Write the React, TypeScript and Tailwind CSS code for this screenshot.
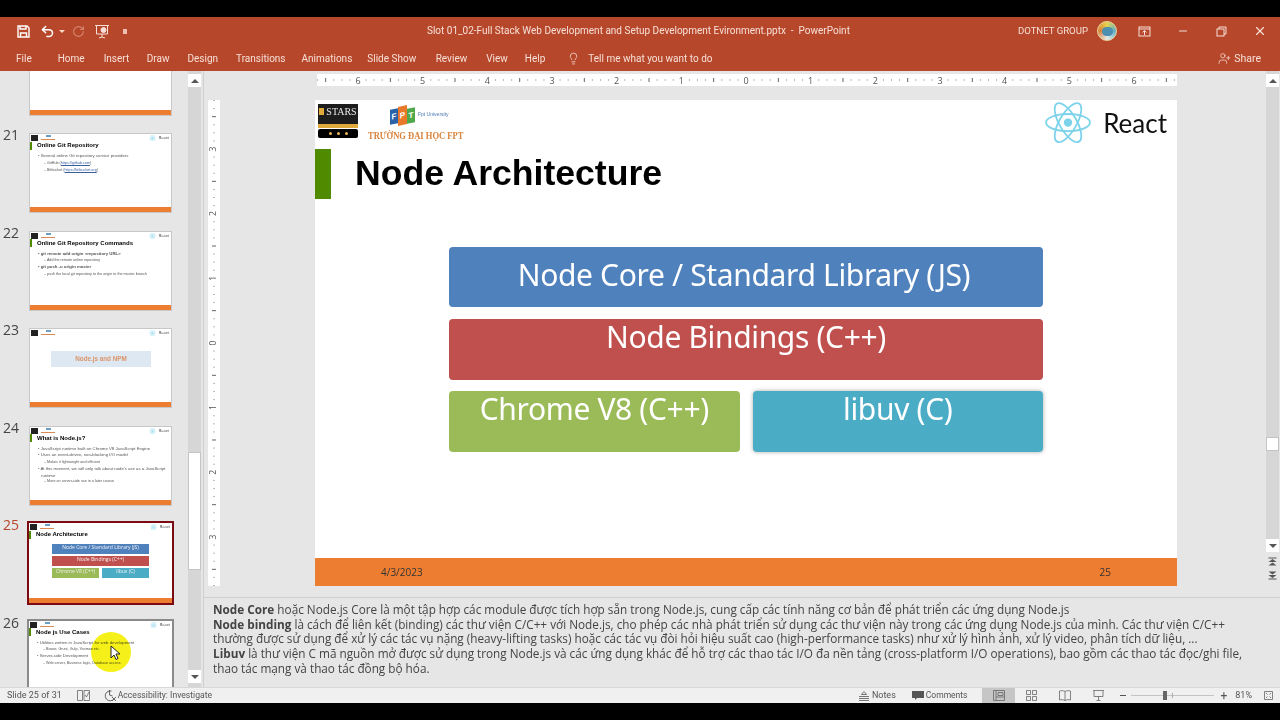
import { Lightbulb, Minus, Undo2, RotateCw, UserPlus, X } from "lucide-react";

const tabs = [
  ["File", "ml-[16px]"],
  ["Home", "ml-[26px]"],
  ["Insert", "ml-[19px]"],
  ["Draw", "ml-[17.5px]"],
  ["Design", "ml-[18px]"],
  ["Transitions", "ml-[18px]"],
  ["Animations", "ml-[16px]"],
  ["Slide Show", "ml-[15px]"],
  ["Review", "ml-[19.5px]"],
  ["View", "ml-[19px]"],
  ["Help", "ml-[17px]"],
];

function ReactLogo({ size, className }: { size: number; className?: string }) {
  return (
    <svg width={size} height={size * 0.9} viewBox="-12 -10.8 24 21.6" fill="none" stroke="#7dd3ea" strokeWidth="0.9" className={className}>
      <circle r="2.1" fill="#7dd3ea" stroke="none" />
      <ellipse rx="11" ry="4.3" />
      <ellipse rx="11" ry="4.3" transform="rotate(60)" />
      <ellipse rx="11" ry="4.3" transform="rotate(120)" />
    </svg>
  );
}

function Thumb({ n, title, children, selected, hover }: { n: number; title?: string; children?: React.ReactNode; selected?: boolean; hover?: boolean }) {
  return (
    <div className="flex h-[80px] shrink-0">
      <div className={`w-[29px] pl-[3px] text-[14px] leading-[18px] -mt-[7px] ${selected ? "text-[#b7472a]" : "text-[#444]"}`}>{n}</div>
      <div className={`relative w-[143px] h-[80px] bg-white flex flex-col ${selected ? "outline-2 outline-[#7b0a12]" : hover ? "outline-2 outline-[#8a8a8a]" : "border border-[#c8c8c8]"}`}>
        <div className="flex items-start justify-between h-[7px] pl-[1px] pr-[2px] pt-[1px] blur-[0.3px]">
          <div className="flex gap-[3px]">
            <div className="w-[7px] h-[6px] bg-[#222]" />
            <div className="w-[14px] h-[6px] flex flex-col items-center">
              <div className="w-[5px] h-[2px] bg-[#6aa0c8]" />
              <div className="w-[14px] h-[1px] mt-[2px] bg-[#d98a55]" />
            </div>
          </div>
          <div className="flex items-center gap-[3px]">
            <ReactLogo size={7} />
            <span className="text-[4px] leading-[6px] text-[#333]">React</span>
          </div>
        </div>
        {title && (
          <div className="flex items-center h-[9px] mb-[3px] blur-[0.25px]">
            <div className="w-[2px] h-[8px] bg-[#4f8a00]" />
            <span className="ml-[5px] text-[6px] font-bold text-black font-['Liberation_Sans',sans-serif] whitespace-nowrap">{title}</span>
          </div>
        )}
        <div className="flex-1 min-h-0 blur-[0.35px]">{children}</div>
        <div className="h-[5px] bg-[#ed7d31] shrink-0" />
      </div>
    </div>
  );
}

function Bullet({ children, sub, bold }: { children: React.ReactNode; sub?: boolean; bold?: boolean }) {
  return (
    <div className={`leading-[6.8px] whitespace-nowrap text-[#555] font-['Liberation_Sans',sans-serif] ${sub ? "pl-[14px] text-[3.7px]" : "pl-[8px] text-[4.3px]"} ${bold ? "font-bold text-[#111]" : ""}`}>
      {sub ? "– " : "• "}
      {children}
    </div>
  );
}

function HRuler() {
  const ticks = Array.from({ length: 107 }, (_, i) => i - 53);
  return (
    <svg width="860" height="12" className="block bg-white">
      {ticks.map((i) => {
        const x = 429 + i * 8.083;
        if (i % 8 === 0) {
          return (
            <text key={i} x={x} y="9.5" fontSize="9" fill="#555" textAnchor="middle" fontFamily="Open Sans">
              {Math.abs(i / 8)}
            </text>
          );
        }
        if (i % 4 === 0) return <line key={i} x1={x} x2={x} y1="4" y2="8" stroke="#666" />;
        return <line key={i} x1={x} x2={x} y1="5" y2="7" stroke="#bbb" />;
      })}
    </svg>
  );
}

function VRuler() {
  const ticks = Array.from({ length: 61 }, (_, i) => i - 30);
  return (
    <svg width="12" height="486" className="block bg-white">
      {ticks.map((i) => {
        const y = 243 + i * 8.083;
        if (i % 8 === 0) {
          return (
            <text key={i} x="6" y={y} fontSize="8.5" fill="#555" textAnchor="middle" dominantBaseline="middle" transform={`rotate(-90 6 ${y})`} fontFamily="Open Sans">
              {Math.abs(i / 8)}
            </text>
          );
        }
        if (i % 4 === 0) return <line key={i} x1="4" x2="8" y1={y} y2={y} stroke="#666" />;
        return <line key={i} x1="5" x2="7" y1={y} y2={y} stroke="#bbb" />;
      })}
    </svg>
  );
}

function ScrollBtn({ down }: { down?: boolean }) {
  return (
    <div className="w-[13px] h-[13px] bg-white flex items-center justify-center shrink-0">
      <div className={`w-0 h-0 border-x-[4px] border-x-transparent ${down ? "border-t-[4px] border-t-[#555]" : "border-b-[4px] border-b-[#555]"}`} />
    </div>
  );
}

export default function App() {
  return (
    <div className="w-[1280px] h-[720px] bg-black flex flex-col overflow-hidden font-['Open_Sans',sans-serif]">
      <div className="h-[17px] shrink-0" />

      {/* title bar + tabs */}
      <div className="h-[54px] shrink-0 bg-[#b7472a] text-[#f6e0d8] flex flex-col font-['Roboto',sans-serif]">
        <div className="relative h-[28px] flex items-center">
          <div className="flex items-center ml-[17px]">
            <svg width="13" height="13" viewBox="0 0 13 13" fill="none" stroke="#fff" strokeWidth="1.4">
              <path d="M1 1h9l2 2v9H1z" />
              <path d="M3 1v3h6V1M3.5 12V8h6v4" />
            </svg>
            <Undo2 size={15} strokeWidth={2.4} className="ml-[10px] text-white" />
            <div className="ml-[4px] w-0 h-0 border-x-[3px] border-x-transparent border-t-[3px] border-t-[#f6d8cc]" />
            <RotateCw size={13} strokeWidth={2} className="ml-[7px] text-[#d5886f]" />
            <svg width="14" height="15" viewBox="0 0 14 15" fill="none" stroke="#f6e0d8" strokeWidth="1" className="ml-[10px]">
              <path d="M0 1.5h14M1.5 2v8h11V2M7 10v3M4 14l3-1 3 1" />
              <circle cx="8.5" cy="6" r="2.5" fill="#f6e0d8" />
            </svg>
            <div className="ml-[14px] w-[4px] h-[5px] bg-[#eebfae]" />
          </div>
          <div className="absolute left-[427px] top-[6px] text-[10px] leading-[15px] whitespace-pre">Slot 01_02-Full Stack Web Development and Setup Development Evironment.pptx  -  PowerPoint</div>
          <div className="ml-auto flex items-center">
            <span className="text-[9.6px]">DOTNET GROUP</span>
            <div className="ml-[9px] w-[20px] h-[20px] rounded-full bg-[conic-gradient(#e8d14a,#5fb0c8,#e8e8e8,#d9823a,#e8d14a)] border border-[#e9d7a0] flex items-center justify-center">
              <div className="w-[11px] h-[9px] rounded-full bg-[#4d8fb0]" />
            </div>
            <svg width="13" height="11" viewBox="0 0 13 11" fill="none" stroke="#f6e0d8" className="ml-[21px]">
              <rect x="1" y="1" width="11" height="9" />
              <path d="M1 3h11M6.5 9V5M4.5 6.5l2-2 2 2" />
            </svg>
            <Minus size={12} className="ml-[26px]" />
            <svg width="11" height="11" viewBox="0 0 11 11" fill="none" stroke="#f6e0d8" className="ml-[27px]">
              <rect x="1" y="3" width="7" height="7" />
              <path d="M3 3V1h7v7H8" />
            </svg>
            <X size={14} className="ml-[26px] mr-[13px]" />
          </div>
        </div>
        <div className="h-[26px] flex items-center pt-[1px] text-[10px]">
          {tabs.map(([t, m]) => (
            <span key={t} className={m}>{t}</span>
          ))}
          <Lightbulb size={13} strokeWidth={1.4} className="ml-[22px]" />
          <span className="ml-[8px]">Tell me what you want to do</span>
          <div className="ml-auto mr-[19px] flex items-center gap-[3px]">
            <UserPlus size={13} strokeWidth={1.4} />
            <span className="text-[10.5px]">Share</span>
          </div>
        </div>
      </div>

      <div className="flex-1 min-h-0 flex bg-[#e6e6e6]">
        {/* slide list */}
        <div className="relative w-[204px] shrink-0 border-r border-r-[#cfcfcf] flex overflow-hidden">
          <div className="w-[188px] shrink-0 flex flex-col gap-[17.5px] -mt-[35.5px]">
            {/* slide 20, scrolled mostly out of view */}
            <div className="ml-[29px] w-[143px] h-[80px] shrink-0 bg-white border border-[#c8c8c8] flex flex-col justify-end">
              <div className="h-[5px] bg-[#ed7d31]" />
            </div>
            <Thumb n={21} title="Online Git Repository">
              <Bullet>Several online Git repository service providers</Bullet>
              <Bullet sub>GitHub (<span className="text-[#3a5fa0] underline">https://github.com</span>)</Bullet>
              <Bullet sub>Bitbucket (<span className="text-[#3a5fa0] underline">https://bitbucket.org</span>)</Bullet>
            </Thumb>
            <Thumb n={22} title="Online Git Repository Commands">
              <Bullet bold>git remote add origin &lt;repository URL&gt;</Bullet>
              <Bullet sub>Add the remote online repository</Bullet>
              <Bullet bold>git push -u origin master</Bullet>
              <Bullet sub>push the local git repository to the origin to the master branch</Bullet>
            </Thumb>
            <Thumb n={23}>
              <div className="ml-[21px] mt-[15px] w-[100px] h-[16px] bg-[#dde8f3] flex items-center justify-center text-[6.3px] font-bold text-[#dc9468] font-['Liberation_Sans',sans-serif]">Node.js and NPM</div>
            </Thumb>
            <Thumb n={24} title="What is Node.js?">
              <Bullet>JavaScript runtime built on Chrome V8 JavaScript Engine</Bullet>
              <Bullet>Uses an event-driven, non-blocking I/O model</Bullet>
              <Bullet sub>Makes it lightweight and efficient</Bullet>
              <Bullet>At this moment, we will only talk about node's use as a JavaScript</Bullet>
              <div className="pl-[11px] text-[4.3px] leading-[5px] text-[#555] font-['Liberation_Sans',sans-serif]">runtime</div>
              <Bullet sub>More on server-side use in a later course</Bullet>
            </Thumb>
            <Thumb n={25} title="Node Architecture" selected>
              <div className="ml-[23px] w-[97px] mt-[2px] flex flex-col gap-[2px] text-[5px] leading-[7px] text-[#f2f2f2] text-center whitespace-nowrap">
                <div className="h-[10px] bg-[#4f81bd]">Node Core / Standard Library (JS)</div>
                <div className="h-[10px] bg-[#c0504d]">Node Bindings (C++)</div>
                <div className="flex gap-[3px]">
                  <div className="h-[10px] flex-1 bg-[#9bbb59]">Chrome V8 (C++)</div>
                  <div className="h-[10px] flex-1 bg-[#4bacc6]">libuv (C)</div>
                </div>
              </div>
            </Thumb>
            <Thumb n={26} title="Node js Use Cases" hover>
              <Bullet>Utilities written in JavaScript for web development</Bullet>
              <Bullet sub>Bower, Grunt, Gulp, Yeoman etc.</Bullet>
              <Bullet>Server-side Development</Bullet>
              <Bullet sub>Web server, Business logic, Database access</Bullet>
            </Thumb>
          </div>

          {/* scrollbar */}
          <div className="w-[13px] h-full bg-[#d6d6d6] flex flex-col pt-[3px] pb-[4px]">
            <ScrollBtn />
            <div className="mt-[365px] h-[118px] bg-white border border-[#c4c4c4]" />
            <div className="mt-auto"><ScrollBtn down /></div>
          </div>

          {/* presenter highlight over slide 26 */}
          <div className="absolute left-[91px] top-[561px] w-[40px] h-[40px] rounded-full bg-[#f4ee00]/90 blur-[0.5px] mix-blend-multiply" />
          <svg width="12" height="16" viewBox="0 0 12 16" className="absolute left-[110px] top-[574px]">
            <path d="M1 1v12l3-3 2 4.5 2-1-2-4.5h4z" fill="#fff" stroke="#222" />
          </svg>
        </div>

        {/* editor + notes */}
        <div className="flex-1 min-w-0 flex flex-col">
          <div className="h-[526px] shrink-0 flex">
            <div className="pl-[4px] pt-[29px]">
              <VRuler />
            </div>
            <div className="ml-[95px] pt-[3px] flex flex-col">
              <div className="ml-[2px]"><HRuler /></div>
              <div className="mt-[14px] w-[862px] h-[486px] bg-white flex flex-col">
                {/* logos */}
                <div className="h-[46px] flex pl-[3px] pt-[4px] shrink-0">
                  <div className="w-[40px] flex flex-col">
                    <div className="h-[20px] bg-[#1d1d1d] text-[#e8e8e8] flex items-start justify-center gap-[2px] pt-[1px] text-[10px] leading-[13px] font-['Liberation_Serif',serif]">
                      <div className="w-[5px] h-[7px] mt-[3px] bg-[#e0a93c]" />
                      STARS
                    </div>
                    <div className="h-[4px] bg-[#e0a93c]" />
                    <div className="h-[9px] mt-[1px] bg-black rounded-[2px] flex items-center justify-center gap-[5px]">
                      <div className="w-[3px] h-[3px] rounded-full bg-[#e8b84a]" />
                      <div className="w-[3px] h-[3px] rounded-full bg-[#e8b84a]" />
                      <div className="w-[3px] h-[3px] rounded-full bg-[#e8b84a]" />
                    </div>
                  </div>
                  <div className="ml-[10px] flex flex-col">
                    <div className="ml-[22px] flex items-center h-[22px]">
                      <span className="w-[8px] h-[15px] mt-[2px] bg-[#2a62a8] text-white text-[8px] font-bold -skew-y-12 text-center leading-[15px] font-['Liberation_Sans',sans-serif]">F</span>
                      <span className="w-[9px] h-[19px] bg-[#e8792b] text-white text-[8px] font-bold -skew-y-12 text-center leading-[19px] font-['Liberation_Sans',sans-serif]">P</span>
                      <span className="w-[8px] h-[15px] bg-[#4fa84a] text-white text-[8px] font-bold -skew-y-12 text-center leading-[15px] font-['Liberation_Sans',sans-serif]">T</span>
                      <span className="ml-[3px] text-[5px] text-[#4a78b0] font-['Liberation_Sans',sans-serif] whitespace-nowrap">Fpt University</span>
                    </div>
                    <div className="mt-[4px] text-[10px] leading-[12px] font-bold text-[#d9823a] whitespace-nowrap origin-left scale-x-[0.85] font-['Liberation_Serif',serif]">TRƯỜNG ĐẠI HỌC FPT</div>
                  </div>
                  <div className="ml-auto flex items-center h-[38px] mr-[10px]">
                    <ReactLogo size={48} />
                    <span className="ml-[11px] text-[26px] leading-[36px] text-[#111] font-['Lato',sans-serif]">React</span>
                  </div>
                </div>
                {/* title */}
                <div className="flex items-center h-[52px] mt-[2px] shrink-0">
                  <div className="w-[16px] h-[50px] bg-[#4f8a00]" />
                  <h1 className="ml-[24px] -mt-[1px] text-[35.6px] font-bold text-black font-['Liberation_Sans',sans-serif] whitespace-nowrap">Node Architecture</h1>
                </div>
                {/* architecture boxes */}
                <div className="ml-[134px] mt-[47px] w-[594px] flex flex-col gap-[12px] text-white text-[30px] text-center font-['Noto_Sans',sans-serif] tracking-[-0.35px]">
                  <div className="h-[60px] bg-[#4f81bd] rounded-[4px] leading-[56px] pr-[4px]">Node Core / Standard Library (JS)</div>
                  <div className="h-[61px] bg-[#c0504d] rounded-[4px] leading-[36px]">Node Bindings (C++)</div>
                  <div className="flex gap-[13px] -mt-[1px]">
                    <div className="h-[61px] flex-1 bg-[#9bbb59] rounded-[4px] leading-[36px]">Chrome V8 (C++)</div>
                    <div className="h-[61px] flex-1 bg-[#4bacc6] rounded-[4px] leading-[36px] shadow-[0_0_4px_#aaa]">libuv (C)</div>
                  </div>
                </div>
                {/* footer */}
                <div className="mt-auto h-[28px] bg-[#ed7d31] flex items-center text-[10px] text-[#333]">
                  <span className="ml-[66px]">4/3/2023</span>
                  <span className="ml-auto mr-[66px]">25</span>
                </div>
              </div>
            </div>
            <div className="ml-auto w-[13px] mr-[1px] pt-[3px] flex flex-col bg-[#d6d6d6]">
              <ScrollBtn />
              <div className="mt-[350px] h-[14px] bg-white border border-[#c4c4c4]" />
              <div className="mt-[88px]"><ScrollBtn down /></div>
              <div className="bg-[#e6e6e6] flex-1 flex flex-col items-center pt-[5px] gap-[5px] text-[#555]">
                <svg width="9" height="9" viewBox="0 0 9 9" fill="currentColor"><path d="M0.5 0.5h8v1h-8zM4.5 2l4 3h-8zM4.5 5.5l4 3h-8z" /></svg>
                <svg width="9" height="9" viewBox="0 0 9 9" fill="currentColor"><path d="M0.5 0.5h8l-4 3zM0.5 4l8 0-4 3zM0.5 7.5h8v1h-8z" /></svg>
              </div>
            </div>
          </div>

          {/* notes */}
          <div className="flex-1 min-h-0 border-t border-t-[#cfcfcf] pl-[9px] pt-[4px] text-[11.75px] leading-[14.7px] text-[#444] whitespace-nowrap overflow-hidden">
            <div><b>Node Core</b> hoặc Node.js Core là một tập hợp các module được tích hợp sẵn trong Node.js, cung cấp các tính năng cơ bản để phát triển các ứng dụng Node.js</div>
            <div><b>Node binding</b> là cách để liên kết (binding) các thư viện C/C++ với Node.js, cho phép các nhà phát triển sử dụng các thư viện này trong các ứng dụng Node.js của mình. Các thư viện C/C++</div>
            <div>thường được sử dụng để xử lý các tác vụ nặng (heavy-lifting tasks) hoặc các tác vụ đòi hỏi hiệu suất cao (high-performance tasks) như xử lý hình ảnh, xử lý video, phân tích dữ liệu, ...</div>
            <div><b>Libuv</b> là thư viện C mã nguồn mở được sử dụng trong Node.js và các ứng dụng khác để hỗ trợ các thao tác I/O đa nền tảng (cross-platform I/O operations), bao gồm các thao tác đọc/ghi file,</div>
            <div>thao tác mạng và thao tác đồng bộ hóa.</div>
          </div>
        </div>
      </div>

      {/* status bar */}
      <div className="h-[16px] shrink-0 bg-[#f0f0f0] flex items-center text-[9px] text-[#555] whitespace-nowrap border-t border-t-[#d8d8d8] font-['Roboto',sans-serif]">
        <span className="ml-[7px]">Slide 25 of 31</span>
        <svg width="13" height="11" viewBox="0 0 13 11" fill="none" stroke="#666" strokeWidth="0.8" className="ml-[15px]">
          <path d="M0.5 0.5h5v10h-5zM7 0.5h5.5v10H7zM8 5l1.5 2L12 2" />
        </svg>
        <svg width="13" height="13" viewBox="0 0 13 13" fill="none" stroke="#555" strokeWidth="0.9" className="ml-[14px]">
          <path d="M7.5 2A5 5 0 1 0 9 11M5.5 1v5l3 1M8 8l4 4M12 8l-4 4" />
        </svg>
        <span className="ml-[1px] text-[8.6px]">Accessibility: Investigate</span>

        <div className="ml-auto mr-[7px] flex items-center h-full">
          <svg width="10" height="10" viewBox="0 0 10 10" fill="none" stroke="#555">
            <path d="M5 0.5l2.5 3h-5zM0 5.5h10M0 7.5h10M0 9.5h10" strokeWidth="0.8" />
          </svg>
          <span className="ml-[3px]">Notes</span>
          <svg width="12" height="11" viewBox="0 0 12 11" fill="#555" className="ml-[16px]">
            <path d="M0 1h12v7H5l-2 2V8H0z" />
          </svg>
          <span className="ml-[2px] text-[8.5px]">Comments</span>
          <div className="ml-[15px] w-[33px] h-full bg-[#c6c6c6] flex items-center justify-center">
            <svg width="12" height="11" viewBox="0 0 12 11" fill="none" stroke="#666"><path d="M0.5 0.5h11v10h-11zM3 0.5v10M3 7h8.5M5 2.5h5v3H5z" strokeWidth="0.8" /></svg>
          </div>
          <svg width="11" height="11" viewBox="0 0 11 11" fill="none" stroke="#666" strokeWidth="0.8" className="ml-[11px]">
            <path d="M0.5 0.5h4v4h-4zM6.5 0.5h4v4h-4zM0.5 6.5h4v4h-4zM6.5 6.5h4v4h-4z" />
          </svg>
          <svg width="12" height="11" viewBox="0 0 12 11" fill="none" stroke="#666" strokeWidth="0.8" className="ml-[22px]">
            <path d="M6 1.5C4.5 0.5 2 0.5 0.5 1v9C2 9.5 4.5 9.5 6 10.5 7.5 9.5 10 9.5 11.5 10V1C10 0.5 7.5 0.5 6 1.5zM6 1.5v9" />
          </svg>
          <svg width="11" height="11" viewBox="0 0 11 11" fill="none" stroke="#666" strokeWidth="0.8" className="ml-[22px]">
            <path d="M0 0.5h11M1 1v5.5h9V1M5.5 6.5V10M3.5 10.5h4" />
          </svg>
          <div className="ml-[16px] w-[6px] h-[1px] bg-[#555]" />
          <div className="relative ml-[5px] w-[83px] h-[1px] bg-[#c4c4c4]">
            <div className="absolute left-[32px] -top-[4px] w-[4px] h-[9px] bg-[#666]" />
            <div className="absolute left-[41px] -top-[2px] w-[1px] h-[5px] bg-[#aaa]" />
          </div>
          <span className="ml-[6px] text-[12px] leading-[12px]">+</span>
          <span className="ml-[8px]">81%</span>
          <svg width="9" height="9" viewBox="0 0 9 9" fill="none" stroke="#666" strokeWidth="0.8" className="ml-[12px]">
            <path d="M0.5 0.5h8v8h-8zM2 2l1.5 1.5M7 2L5.5 3.5M2 7l1.5-1.5M7 7L5.5 5.5" />
          </svg>
        </div>
      </div>

      <div className="h-[17px] shrink-0" />
    </div>
  );
}
